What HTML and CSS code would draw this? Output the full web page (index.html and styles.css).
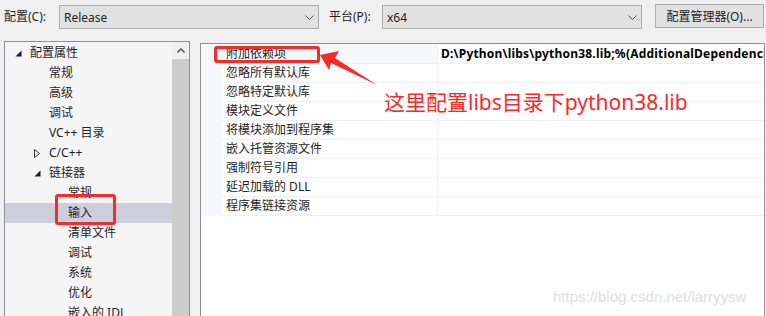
FILE: index.html
```html
<!DOCTYPE html>
<html lang="zh-CN">
<head>
    <meta charset="UTF-8">
    <meta name="viewport" content="width=device-width, initial-scale=1.0">
    <title>链接器 - 输入</title>
    <link rel="stylesheet" href="styles.css">
</head>
<body>
    <div class="toolbar">
        <span class="lbl lbl-config">配置(C):</span>
        <div class="select sel-config">
            <span>Release</span>
            <svg class="chevron" width="9" height="5" viewBox="0 0 9 5"><polyline points="0.5,0.5 4.5,4.5 8.5,0.5" fill="none" stroke="#555" stroke-width="1"/></svg>
        </div>
        <span class="lbl lbl-platform">平台(P):</span>
        <div class="select sel-platform">
            <span>x64</span>
            <svg class="chevron" width="9" height="5" viewBox="0 0 9 5"><polyline points="0.5,0.5 4.5,4.5 8.5,0.5" fill="none" stroke="#555" stroke-width="1"/></svg>
        </div>
        <button class="btn">配置管理器(O)...</button>
    </div>

    <div class="main">
        <div class="tree-panel">
            <div class="tree">
                <div class="node lv0"><span class="twisty"><svg width="7" height="7" viewBox="0 0 7 7"><polygon points="6.5,0.5 6.5,6.5 0.5,6.5" fill="#1e1e1e"/></svg></span>配置属性</div>
                <div class="node lv1"><span class="twisty"></span>常规</div>
                <div class="node lv1"><span class="twisty"></span>高级</div>
                <div class="node lv1"><span class="twisty"></span>调试</div>
                <div class="node lv1"><span class="twisty"></span>VC++ 目录</div>
                <div class="node lv1"><span class="twisty"><svg width="6" height="9" viewBox="0 0 6 9"><polygon points="0.5,0.5 5.5,4.5 0.5,8.5" fill="none" stroke="#333" stroke-width="1"/></svg></span>C/C++</div>
                <div class="node lv1"><span class="twisty"><svg width="7" height="7" viewBox="0 0 7 7"><polygon points="6.5,0.5 6.5,6.5 0.5,6.5" fill="#1e1e1e"/></svg></span>链接器</div>
                <div class="node lv2"><span class="twisty"></span>常规</div>
                <div class="node lv2 selected"><span class="twisty"></span>输入</div>
                <div class="node lv2"><span class="twisty"></span>清单文件</div>
                <div class="node lv2"><span class="twisty"></span>调试</div>
                <div class="node lv2"><span class="twisty"></span>系统</div>
                <div class="node lv2"><span class="twisty"></span>优化</div>
                <div class="node lv2"><span class="twisty"></span>嵌入的 IDL</div>
            </div>
            <div class="scrollbar">
                <div class="scroll-btn">
                    <svg width="8" height="5" viewBox="0 0 8 5"><polyline points="0.5,4.5 4,1 7.5,4.5" fill="none" stroke="#606060" stroke-width="1.6"/></svg>
                </div>
                <div class="scroll-thumb"></div>
            </div>
        </div>

        <div class="grid-panel">
            <div class="grid">
                <div class="row current"><div class="gutter"></div><div class="prop">附加依赖项</div><div class="value">D:\Python\libs\python38.lib;%(AdditionalDependencies)</div></div>
                <div class="row"><div class="gutter"></div><div class="prop">忽略所有默认库</div><div class="value"></div></div>
                <div class="row"><div class="gutter"></div><div class="prop">忽略特定默认库</div><div class="value"></div></div>
                <div class="row"><div class="gutter"></div><div class="prop">模块定义文件</div><div class="value"></div></div>
                <div class="row"><div class="gutter"></div><div class="prop">将模块添加到程序集</div><div class="value"></div></div>
                <div class="row"><div class="gutter"></div><div class="prop">嵌入托管资源文件</div><div class="value"></div></div>
                <div class="row"><div class="gutter"></div><div class="prop">强制符号引用</div><div class="value"></div></div>
                <div class="row"><div class="gutter"></div><div class="prop">延迟加载的 DLL</div><div class="value"></div></div>
                <div class="row"><div class="gutter"></div><div class="prop">程序集链接资源</div><div class="value"></div></div>
            </div>
        </div>
    </div>

    <!-- annotations drawn on top of the screenshot -->
    <div class="mark mark-input"></div>
    <div class="mark mark-dep"></div>
    <svg class="arrow" width="70" height="45" viewBox="310 45 70 45">
        <polygon points="320,55 339,51 335,58 377,85 331,63 329,70" fill="#f52a2a"/>
    </svg>
    <div class="note">这里配置libs目录下python38.lib</div>
    <div class="watermark">https://blog.csdn.net/larryysw</div>
</body>
</html>
```

FILE: styles.css
```css
body {
    margin: 0;
    width: 766px;
    height: 316px;
    overflow: hidden;
    position: relative;
    background-color: #f0f0f0;
    font-family: "Noto Sans", "Noto Sans CJK SC", sans-serif;
    font-size: 12px;
    color: #1e1e1e;
}

/* top bar */
.toolbar {
    display: flex;
    align-items: flex-start;
    height: 41px;
    padding-left: 4px;
    box-sizing: border-box;
}

.lbl {
    margin-top: 9px;
    line-height: 16px;
}

.lbl-config {
    width: 55px;
}

.lbl-platform {
    width: 53px;
    margin-left: 10px;
}

.select {
    display: flex;
    align-items: center;
    justify-content: space-between;
    box-sizing: border-box;
    width: 260px;
    height: 24px;
    margin-top: 5px;
    padding: 0 4px 0 4px;
    background-color: #e1e1e1;
    border: 1px solid #adadad;
    font-size: 12px;
}

.btn {
    box-sizing: border-box;
    width: 109px;
    height: 24px;
    margin-top: 4px;
    margin-left: 13px;
    padding: 0;
    background-color: #e1e1e1;
    border: 1px solid #adadad;
    font-family: inherit;
    font-size: 12px;
    color: #1e1e1e;
}

/* panels */
.main {
    display: flex;
    align-items: flex-start;
}

.tree-panel {
    display: flex;
    box-sizing: border-box;
    width: 186px;
    height: 300px;
    margin-left: 4px;
    border: 1px solid #8e8f94;
    background-color: #f5f5f5;
}

.tree {
    flex: 1;
    padding-top: 1px;
}

.node {
    display: flex;
    align-items: center;
    height: 20px;
    line-height: 20px;
    white-space: nowrap;
}

.lv0 { padding-left: 6px; }
.lv1 { padding-left: 25px; }
.lv2 { padding-left: 44px; }

.twisty {
    display: flex;
    align-items: center;
    width: 19px;
    height: 20px;
    padding-left: 4px;
    box-sizing: border-box;
}

.node.selected {
    background-color: #cccedb;
}

.scrollbar {
    display: flex;
    flex-direction: column;
    width: 17px;
    background-color: #f0f0f0;
}

.scroll-btn {
    display: flex;
    justify-content: center;
    align-items: center;
    height: 17px;
}

.scroll-thumb {
    flex: 1;
    background-color: #cdcdcd;
}

.grid-panel {
    box-sizing: border-box;
    width: 565px;
    height: 300px;
    margin-top: 2px;
    margin-left: 10px;
    padding-top: 1px;
    border: 1px solid #8e8f94;
    background-color: #fff;
}

.row {
    display: flex;
    height: 19px;
}

.gutter {
    width: 21px;
    background-color: #f4f7fb;
}

.prop,
.value {
    box-sizing: border-box;
    height: 19px;
    line-height: 18px;
    border-bottom: 1px solid #eef0f6;
    white-space: nowrap;
    overflow: hidden;
}

.prop {
    width: 215px;
    padding-left: 4px;
}

.value {
    flex: 1;
    padding-left: 3px;
    border-left: 1px solid #eef0f6;
    font-weight: bold;
    letter-spacing: 0.2px;
    color: #000;
}

.row.current .prop {
    background-color: #f4f7fb;
}

/* annotations */
.mark {
    position: absolute;
    box-sizing: border-box;
    border: 3px solid #f52a2a;
    border-radius: 3px;
}

.mark-input {
    left: 55px;
    top: 194px;
    width: 61px;
    height: 31px;
}

.mark-dep {
    left: 214px;
    top: 46px;
    width: 106px;
    height: 17px;
}

.arrow {
    position: absolute;
    left: 310px;
    top: 45px;
}

.note {
    position: absolute;
    left: 384px;
    top: 89px;
    font-size: 21px;
    line-height: 26px;
    color: #f52a2a;
    white-space: nowrap;
}

.watermark {
    position: absolute;
    left: 553px;
    top: 288px;
    font-family: "Liberation Sans", sans-serif;
    font-size: 15px;
    line-height: 18px;
    color: #dedede;
}
```
